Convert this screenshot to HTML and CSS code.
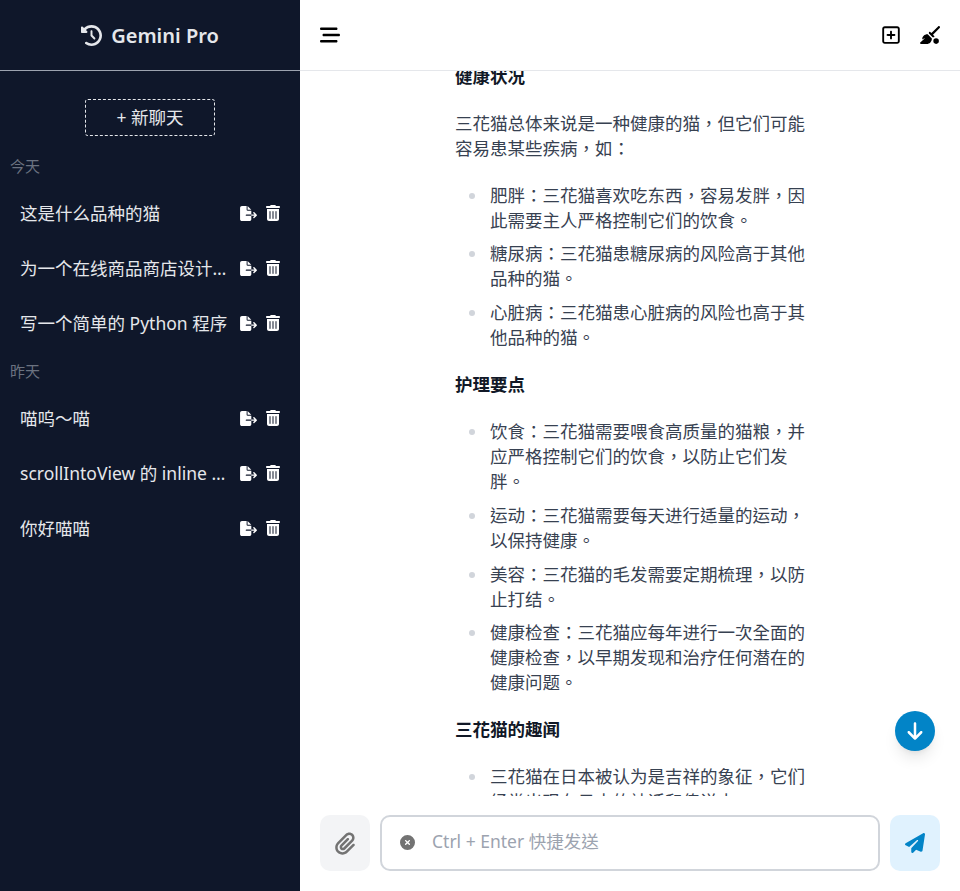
FILE: index.html
```html
<!DOCTYPE html>
<html lang="zh-TW">
<head>
  <meta charset="UTF-8" />
  <meta name="viewport" content="width=device-width, initial-scale=1.0"/>
  <title>Gemini Pro</title>
  <link rel="stylesheet" href="styles.css">
</head>
<body>
  <div class="app">
    <!-- Sidebar: brand, new chat, history -->
    <aside class="sidebar">
      <div class="brand">
        <svg class="brand-icon" viewBox="0 0 512 512"><path d="M75 75L41 41C25.9 25.9 0 36.6 0 57.9V168c0 13.3 10.7 24 24 24H134.1c21.4 0 32.1-25.9 17-41l-30.8-30.8C155 85.5 203 64 256 64c106 0 192 86 192 192s-86 192-192 192c-40.8 0-78.6-12.7-109.7-34.4c-14.5-10.1-34.4-6.6-44.6 7.9s-6.6 34.4 7.9 44.6C151.2 495 201.7 512 256 512c141.4 0 256-114.6 256-256S397.4 0 256 0C185.3 0 121.3 28.7 75 75zm181 53c-13.3 0-24 10.7-24 24V256c0 6.4 2.5 12.5 7 17l72 72c9.4 9.4 24.6 9.4 33.9 0s9.4-24.6 0-33.9l-65-65V152c0-13.3-10.7-24-24-24z"/></svg>
        <span>Gemini Pro</span>
      </div>
      <div class="new-chat-row">
        <button class="new-chat">+ 新聊天</button>
      </div>

      <div class="group-label">今天</div>
      <div class="chat-item">
        <span class="chat-title">这是什么品种的猫</span>
        <svg class="act-export" viewBox="0 0 576 512"><path d="M0 64C0 28.7 28.7 0 64 0H224V128c0 17.7 14.3 32 32 32H384V288H216c-13.3 0-24 10.7-24 24s10.7 24 24 24H384V448c0 35.3-28.7 64-64 64H64c-35.3 0-64-28.7-64-64V64zM384 336V288H494.1l-39-39c-9.4-9.4-9.4-24.6 0-33.9s24.6-9.4 33.9 0l80 80c9.4 9.4 9.4 24.6 0 33.9l-80 80c-9.4 9.4-24.6 9.4-33.9 0s-9.4-24.6 0-33.9l39-39H384zm0-208H256V0L384 128z"/></svg>
        <svg class="act-trash" viewBox="0 0 448 512"><path d="M135.2 17.7C140.6 6.8 151.7 0 163.8 0H284.2c12.1 0 23.2 6.8 28.6 17.7L320 32h96c17.7 0 32 14.3 32 32s-14.3 32-32 32H32C14.3 96 0 81.7 0 64S14.3 32 32 32h96l7.2-14.3zM32 128H416V448c0 35.3-28.7 64-64 64H96c-35.3 0-64-28.7-64-64V128zm96 64c-8.8 0-16 7.2-16 16V432c0 8.8 7.2 16 16 16s16-7.2 16-16V208c0-8.8-7.2-16-16-16zm96 0c-8.8 0-16 7.2-16 16V432c0 8.8 7.2 16 16 16s16-7.2 16-16V208c0-8.8-7.2-16-16-16zm96 0c-8.8 0-16 7.2-16 16V432c0 8.8 7.2 16 16 16s16-7.2 16-16V208c0-8.8-7.2-16-16-16z"/></svg>
      </div>
      <div class="chat-item">
        <span class="chat-title">为一个在线商品商店设计一个徽标</span>
        <svg class="act-export" viewBox="0 0 576 512"><path d="M0 64C0 28.7 28.7 0 64 0H224V128c0 17.7 14.3 32 32 32H384V288H216c-13.3 0-24 10.7-24 24s10.7 24 24 24H384V448c0 35.3-28.7 64-64 64H64c-35.3 0-64-28.7-64-64V64zM384 336V288H494.1l-39-39c-9.4-9.4-9.4-24.6 0-33.9s24.6-9.4 33.9 0l80 80c9.4 9.4 9.4 24.6 0 33.9l-80 80c-9.4 9.4-24.6 9.4-33.9 0s-9.4-24.6 0-33.9l39-39H384zm0-208H256V0L384 128z"/></svg>
        <svg class="act-trash" viewBox="0 0 448 512"><path d="M135.2 17.7C140.6 6.8 151.7 0 163.8 0H284.2c12.1 0 23.2 6.8 28.6 17.7L320 32h96c17.7 0 32 14.3 32 32s-14.3 32-32 32H32C14.3 96 0 81.7 0 64S14.3 32 32 32h96l7.2-14.3zM32 128H416V448c0 35.3-28.7 64-64 64H96c-35.3 0-64-28.7-64-64V128zm96 64c-8.8 0-16 7.2-16 16V432c0 8.8 7.2 16 16 16s16-7.2 16-16V208c0-8.8-7.2-16-16-16zm96 0c-8.8 0-16 7.2-16 16V432c0 8.8 7.2 16 16 16s16-7.2 16-16V208c0-8.8-7.2-16-16-16zm96 0c-8.8 0-16 7.2-16 16V432c0 8.8 7.2 16 16 16s16-7.2 16-16V208c0-8.8-7.2-16-16-16z"/></svg>
      </div>
      <div class="chat-item">
        <span class="chat-title">写一个简单的 Python 程序</span>
        <svg class="act-export" viewBox="0 0 576 512"><path d="M0 64C0 28.7 28.7 0 64 0H224V128c0 17.7 14.3 32 32 32H384V288H216c-13.3 0-24 10.7-24 24s10.7 24 24 24H384V448c0 35.3-28.7 64-64 64H64c-35.3 0-64-28.7-64-64V64zM384 336V288H494.1l-39-39c-9.4-9.4-9.4-24.6 0-33.9s24.6-9.4 33.9 0l80 80c9.4 9.4 9.4 24.6 0 33.9l-80 80c-9.4 9.4-24.6 9.4-33.9 0s-9.4-24.6 0-33.9l39-39H384zm0-208H256V0L384 128z"/></svg>
        <svg class="act-trash" viewBox="0 0 448 512"><path d="M135.2 17.7C140.6 6.8 151.7 0 163.8 0H284.2c12.1 0 23.2 6.8 28.6 17.7L320 32h96c17.7 0 32 14.3 32 32s-14.3 32-32 32H32C14.3 96 0 81.7 0 64S14.3 32 32 32h96l7.2-14.3zM32 128H416V448c0 35.3-28.7 64-64 64H96c-35.3 0-64-28.7-64-64V128zm96 64c-8.8 0-16 7.2-16 16V432c0 8.8 7.2 16 16 16s16-7.2 16-16V208c0-8.8-7.2-16-16-16zm96 0c-8.8 0-16 7.2-16 16V432c0 8.8 7.2 16 16 16s16-7.2 16-16V208c0-8.8-7.2-16-16-16zm96 0c-8.8 0-16 7.2-16 16V432c0 8.8 7.2 16 16 16s16-7.2 16-16V208c0-8.8-7.2-16-16-16z"/></svg>
      </div>

      <div class="group-label">昨天</div>
      <div class="chat-item">
        <span class="chat-title">喵呜～喵</span>
        <svg class="act-export" viewBox="0 0 576 512"><path d="M0 64C0 28.7 28.7 0 64 0H224V128c0 17.7 14.3 32 32 32H384V288H216c-13.3 0-24 10.7-24 24s10.7 24 24 24H384V448c0 35.3-28.7 64-64 64H64c-35.3 0-64-28.7-64-64V64zM384 336V288H494.1l-39-39c-9.4-9.4-9.4-24.6 0-33.9s24.6-9.4 33.9 0l80 80c9.4 9.4 9.4 24.6 0 33.9l-80 80c-9.4 9.4-24.6 9.4-33.9 0s-9.4-24.6 0-33.9l39-39H384zm0-208H256V0L384 128z"/></svg>
        <svg class="act-trash" viewBox="0 0 448 512"><path d="M135.2 17.7C140.6 6.8 151.7 0 163.8 0H284.2c12.1 0 23.2 6.8 28.6 17.7L320 32h96c17.7 0 32 14.3 32 32s-14.3 32-32 32H32C14.3 96 0 81.7 0 64S14.3 32 32 32h96l7.2-14.3zM32 128H416V448c0 35.3-28.7 64-64 64H96c-35.3 0-64-28.7-64-64V128zm96 64c-8.8 0-16 7.2-16 16V432c0 8.8 7.2 16 16 16s16-7.2 16-16V208c0-8.8-7.2-16-16-16zm96 0c-8.8 0-16 7.2-16 16V432c0 8.8 7.2 16 16 16s16-7.2 16-16V208c0-8.8-7.2-16-16-16zm96 0c-8.8 0-16 7.2-16 16V432c0 8.8 7.2 16 16 16s16-7.2 16-16V208c0-8.8-7.2-16-16-16z"/></svg>
      </div>
      <div class="chat-item">
        <span class="chat-title">scrollIntoView 的 inline 参数是什么</span>
        <svg class="act-export" viewBox="0 0 576 512"><path d="M0 64C0 28.7 28.7 0 64 0H224V128c0 17.7 14.3 32 32 32H384V288H216c-13.3 0-24 10.7-24 24s10.7 24 24 24H384V448c0 35.3-28.7 64-64 64H64c-35.3 0-64-28.7-64-64V64zM384 336V288H494.1l-39-39c-9.4-9.4-9.4-24.6 0-33.9s24.6-9.4 33.9 0l80 80c9.4 9.4 9.4 24.6 0 33.9l-80 80c-9.4 9.4-24.6 9.4-33.9 0s-9.4-24.6 0-33.9l39-39H384zm0-208H256V0L384 128z"/></svg>
        <svg class="act-trash" viewBox="0 0 448 512"><path d="M135.2 17.7C140.6 6.8 151.7 0 163.8 0H284.2c12.1 0 23.2 6.8 28.6 17.7L320 32h96c17.7 0 32 14.3 32 32s-14.3 32-32 32H32C14.3 96 0 81.7 0 64S14.3 32 32 32h96l7.2-14.3zM32 128H416V448c0 35.3-28.7 64-64 64H96c-35.3 0-64-28.7-64-64V128zm96 64c-8.8 0-16 7.2-16 16V432c0 8.8 7.2 16 16 16s16-7.2 16-16V208c0-8.8-7.2-16-16-16zm96 0c-8.8 0-16 7.2-16 16V432c0 8.8 7.2 16 16 16s16-7.2 16-16V208c0-8.8-7.2-16-16-16zm96 0c-8.8 0-16 7.2-16 16V432c0 8.8 7.2 16 16 16s16-7.2 16-16V208c0-8.8-7.2-16-16-16z"/></svg>
      </div>
      <div class="chat-item">
        <span class="chat-title">你好喵喵</span>
        <svg class="act-export" viewBox="0 0 576 512"><path d="M0 64C0 28.7 28.7 0 64 0H224V128c0 17.7 14.3 32 32 32H384V288H216c-13.3 0-24 10.7-24 24s10.7 24 24 24H384V448c0 35.3-28.7 64-64 64H64c-35.3 0-64-28.7-64-64V64zM384 336V288H494.1l-39-39c-9.4-9.4-9.4-24.6 0-33.9s24.6-9.4 33.9 0l80 80c9.4 9.4 9.4 24.6 0 33.9l-80 80c-9.4 9.4-24.6 9.4-33.9 0s-9.4-24.6 0-33.9l39-39H384zm0-208H256V0L384 128z"/></svg>
        <svg class="act-trash" viewBox="0 0 448 512"><path d="M135.2 17.7C140.6 6.8 151.7 0 163.8 0H284.2c12.1 0 23.2 6.8 28.6 17.7L320 32h96c17.7 0 32 14.3 32 32s-14.3 32-32 32H32C14.3 96 0 81.7 0 64S14.3 32 32 32h96l7.2-14.3zM32 128H416V448c0 35.3-28.7 64-64 64H96c-35.3 0-64-28.7-64-64V128zm96 64c-8.8 0-16 7.2-16 16V432c0 8.8 7.2 16 16 16s16-7.2 16-16V208c0-8.8-7.2-16-16-16zm96 0c-8.8 0-16 7.2-16 16V432c0 8.8 7.2 16 16 16s16-7.2 16-16V208c0-8.8-7.2-16-16-16zm96 0c-8.8 0-16 7.2-16 16V432c0 8.8 7.2 16 16 16s16-7.2 16-16V208c0-8.8-7.2-16-16-16z"/></svg>
      </div>
    </aside>

    <!-- Main: toolbar, message, input -->
    <main class="main">
      <header class="toolbar">
        <svg class="tool-menu" viewBox="0 0 512 512"><path d="M0 96C0 78.3 14.3 64 32 64H416c17.7 0 32 14.3 32 32s-14.3 32-32 32H32C14.3 128 0 113.7 0 96zM64 256c0-17.7 14.3-32 32-32H480c17.7 0 32 14.3 32 32s-14.3 32-32 32H96c-17.7 0-32-14.3-32-32zM448 416c0 17.7-14.3 32-32 32H32c-17.7 0-32-14.3-32-32s14.3-32 32-32H416c17.7 0 32 14.3 32 32z"/></svg>
        <div class="toolbar-right">
          <svg class="tool-plus" viewBox="0 0 448 512"><path d="M64 80c-8.8 0-16 7.2-16 16V416c0 8.8 7.2 16 16 16H384c8.8 0 16-7.2 16-16V96c0-8.8-7.2-16-16-16H64zM0 96C0 60.7 28.7 32 64 32H384c35.3 0 64 28.7 64 64V416c0 35.3-28.7 64-64 64H64c-35.3 0-64-28.7-64-64V96zM200 344V280H136c-13.3 0-24-10.7-24-24s10.7-24 24-24h64V168c0-13.3 10.7-24 24-24s24 10.7 24 24v64h64c13.3 0 24 10.7 24 24s-10.7 24-24 24H248v64c0 13.3-10.7 24-24 24s-24-10.7-24-24z"/></svg>
          <svg class="tool-broom" viewBox="0 0 576 512"><path d="M566.6 9.4c12.5 12.5 12.5 32.8 0 45.3l-192 192 34.7 34.7c4.2 4.2 6.6 10 6.6 16c0 12.5-10.1 22.6-22.6 22.6H364.3L256 211.7V182.6c0-12.5 10.1-22.6 22.6-22.6c6 0 11.8 2.4 16 6.6l34.7 34.7 192-192c12.5-12.5 32.8-12.5 45.3 0zm-344 225.5L341.1 353.4c3.7 42.7-11.7 85.2-42.3 115.8C271.4 496.6 234.3 512 195.5 512L22.1 512C9.9 512 0 502.1 0 489.9c0-6.3 2.7-12.3 7.3-16.5L133.7 359.7c4.2-3.7-.4-10.4-5.4-7.9L77.2 377.4c-6.1 3-13.2-1.4-13.2-8.2c0-31.5 12.5-61.7 34.8-84l8-8c30.6-30.6 73.1-46 115.8-42.3zM464 352a80 80 0 1 1 0 160 80 80 0 1 1 0-160z"/></svg>
        </div>
      </header>

      <section class="messages">
        <article class="prose">
          <h4>健康状况</h4>
          <p>三花猫总体来说是一种健康的猫，但它们可能容易患某些疾病，如：</p>
          <ul>
            <li>肥胖：三花猫喜欢吃东西，容易发胖，因此需要主人严格控制它们的饮食。</li>
            <li>糖尿病：三花猫患糖尿病的风险高于其他品种的猫。</li>
            <li>心脏病：三花猫患心脏病的风险也高于其他品种的猫。</li>
          </ul>
          <h4>护理要点</h4>
          <ul>
            <li>饮食：三花猫需要喂食高质量的猫粮，并应严格控制它们的饮食，以防止它们发胖。</li>
            <li>运动：三花猫需要每天进行适量的运动，以保持健康。</li>
            <li>美容：三花猫的毛发需要定期梳理，以防止打结。</li>
            <li>健康检查：三花猫应每年进行一次全面的健康检查，以早期发现和治疗任何潜在的健康问题。</li>
          </ul>
          <h4>三花猫的趣闻</h4>
          <ul>
            <li>三花猫在日本被认为是吉祥的象征，它们经常出现在日本的神话和传说中。</li>
          </ul>
        </article>
      </section>

      <button class="scroll-down">
        <svg viewBox="0 0 384 512"><path d="M169.4 470.6c12.5 12.5 32.8 12.5 45.3 0l160-160c12.5-12.5 12.5-32.8 0-45.3s-32.8-12.5-45.3 0L224 370.8 224 64c0-17.7-14.3-32-32-32s-32 14.3-32 32l0 306.7L54.6 265.4c-12.5-12.5-32.8-12.5-45.3 0s-12.5 32.8 0 45.3l160 160z"/></svg>
      </button>

      <footer class="composer">
        <button class="attach">
          <svg viewBox="0 0 448 512"><path d="M364.2 83.8c-24.4-24.4-64-24.4-88.4 0l-184 184c-42.1 42.1-42.1 110.3 0 152.4s110.3 42.1 152.4 0l152-152c10.9-10.9 28.7-10.9 39.6 0s10.9 28.7 0 39.6l-152 152c-64 64-167.6 64-231.6 0s-64-167.6 0-231.6l184-184c46.3-46.3 121.3-46.3 167.6 0s46.3 121.3 0 167.6l-176 176c-28.6 28.6-75 28.6-103.6 0s-28.6-75 0-103.6l144-144c10.9-10.9 28.7-10.9 39.6 0s10.9 28.7 0 39.6l-144 144c-6.7 6.7-6.7 17.7 0 24.4s17.7 6.7 24.4 0l176-176c24.4-24.4 24.4-64 0-88.4z"/></svg>
        </button>
        <div class="input-box">
          <svg class="clear-icon" viewBox="0 0 512 512"><path d="M256 512A256 256 0 1 0 256 0a256 256 0 1 0 0 512zM175 175c9.4-9.4 24.6-9.4 33.9 0l47 47 47-47c9.4-9.4 24.6-9.4 33.9 0s9.4 24.6 0 33.9l-47 47 47 47c9.4 9.4 9.4 24.6 0 33.9s-24.6 9.4-33.9 0l-47-47-47 47c-9.4 9.4-24.6 9.4-33.9 0s-9.4-24.6 0-33.9l47-47-47-47c-9.4-9.4-9.4-24.6 0-33.9z"/></svg>
          <span class="placeholder">Ctrl + Enter 快捷发送</span>
        </div>
        <button class="send">
          <svg viewBox="0 0 512 512"><path d="M498.1 5.6c10.1 7 15.4 19.1 13.5 31.2l-64 416c-1.5 9.7-7.4 18.2-16 23s-18.9 5.4-28 1.6L284 427.7l-68.5 74.1c-8.9 9.7-22.9 12.9-35.2 8.1S160 493.2 160 480V396.4c0-4 1.5-7.8 4.2-10.7L331.8 202.8c5.8-6.3 5.6-16-.4-22s-15.7-6.4-22-.7L106 360.8 17.7 316.6C7.1 311.3 .3 300.7 0 288.9s5.9-22.8 16.1-28.7l448-256c10.7-6.1 23.9-5.5 34 1.4z"/></svg>
        </button>
      </footer>
    </main>
  </div>
</body>
</html>
```

FILE: styles.css
```css
* {
  box-sizing: border-box;
}
body {
  margin: 0;
  font-family: "Noto Sans", "Noto Sans CJK TC", sans-serif;
  color: #111827;
  background-color: #fff;
}
svg {
  display: block;
  fill: currentColor;
}
button {
  font-family: inherit;
  border: none;
  padding: 0;
}
.app {
  display: flex;
  height: 891px;
  overflow: hidden;
}

/* Sidebar */
.sidebar {
  width: 300px;
  flex-shrink: 0;
  background-color: #0f172a;
  color: #e5e7eb;
}
.brand {
  height: 71px;
  display: flex;
  align-items: center;
  justify-content: center;
  gap: 9px;
  font-size: 20px;
  font-weight: 600;
  border-bottom: 1px solid #9ca3af;
  color: #e5e7eb;
}
.brand-icon {
  width: 21px;
  height: 21px;
}
.new-chat-row {
  display: flex;
  justify-content: center;
  padding-top: 28px;
}
.new-chat {
  width: 130px;
  height: 37px;
  padding-bottom: 2px;
  background: transparent;
  color: #e5e7eb;
  font-size: 17.5px;
  border: 1px dashed #e5e7eb;
  border-radius: 3px;
}
.group-label {
  height: 25px;
  margin-top: 18px;
  padding-left: 10px;
  font-size: 15px;
  line-height: 25px;
  color: #6b7280;
}
.chat-item {
  height: 55px;
  display: flex;
  align-items: center;
  padding: 0 20px;
  font-size: 17.5px;
}
.chat-item + .group-label {
  margin-top: 9px;
}
.group-label + .chat-item {
  margin-top: 6px;
}
.chat-title {
  flex: 1;
  min-width: 0;
  white-space: nowrap;
  overflow: hidden;
  text-overflow: ellipsis;
  margin-right: 11px;
}
.act-export {
  width: 17px;
  height: 15px;
  color: #fff;
  margin-top: 1px;
  margin-right: 9px;
}
.act-trash {
  width: 14px;
  height: 16px;
  color: #fff;
  margin-top: 1px;
}

/* Main column */
.main {
  flex: 1;
  min-width: 0;
  position: relative;
  display: flex;
  flex-direction: column;
}
.toolbar {
  height: 71px;
  flex-shrink: 0;
  display: flex;
  align-items: center;
  justify-content: space-between;
  padding: 0 20px;
  border-bottom: 1px solid #e5e7eb;
  background-color: #fff;
  color: #000;
}
.toolbar-right {
  display: flex;
  align-items: center;
  gap: 20px;
}
.tool-menu {
  width: 20px;
  height: 20px;
}
.tool-plus {
  width: 18px;
  height: 20px;
}
.tool-broom {
  width: 20px;
  height: 18px;
}

/* Message */
.messages {
  flex: 1;
  min-height: 0;
  overflow: hidden;
  margin-bottom: 19px;
}
.prose {
  width: 350px;
  margin: -7.5px auto 0;
  font-size: 17.5px;
  line-height: 25px;
  color: #374151;
}
.prose h4 {
  margin: 0 0 22px;
  font-size: 17.5px;
  font-weight: 700;
  color: #111827;
}
.prose p {
  margin: 0 0 22px;
}
.prose ul {
  margin: 0 0 22px;
  padding-left: 35px;
  list-style: none;
}
.prose li {
  position: relative;
  margin-bottom: 8.75px;
}
.prose li::before {
  content: "";
  position: absolute;
  left: -21px;
  top: 10px;
  width: 6px;
  height: 6px;
  border-radius: 50%;
  background-color: #d1d5db;
}

/* Scroll to bottom */
.scroll-down {
  position: absolute;
  left: 595px;
  top: 711px;
  width: 40px;
  height: 40px;
  border-radius: 50%;
  background-color: #0284c7;
  color: #fff;
  display: flex;
  align-items: center;
  justify-content: center;
  box-shadow: 0 10px 15px -3px rgba(0, 0, 0, 0.1), 0 4px 6px -4px rgba(0, 0, 0, 0.1);
}
.scroll-down svg {
  width: 16px;
  height: 20px;
}

/* Input row */
.composer {
  flex-shrink: 0;
  display: flex;
  gap: 10px;
  padding: 0 20px 20px;
}
.attach, .send {
  width: 50px;
  height: 56px;
  border-radius: 10px;
  display: flex;
  align-items: center;
  justify-content: center;
}
.attach {
  background-color: #f3f4f6;
  color: #737373;
}
.attach svg {
  width: 20px;
  height: 23px;
}
.send {
  background-color: #e0f2fe;
  color: #0284c7;
}
.send svg {
  width: 20px;
  height: 20px;
}
.input-box {
  flex: 1;
  height: 56px;
  display: flex;
  align-items: center;
  border: 2px solid #d1d5db;
  border-radius: 10px;
  padding-left: 18px;
  font-size: 17.5px;
}
.clear-icon {
  width: 15px;
  height: 15px;
  color: #737373;
  margin-right: 17px;
  margin-bottom: 1px;
}
.placeholder {
  color: #9ca3af;
  padding-bottom: 5px;
}
```
